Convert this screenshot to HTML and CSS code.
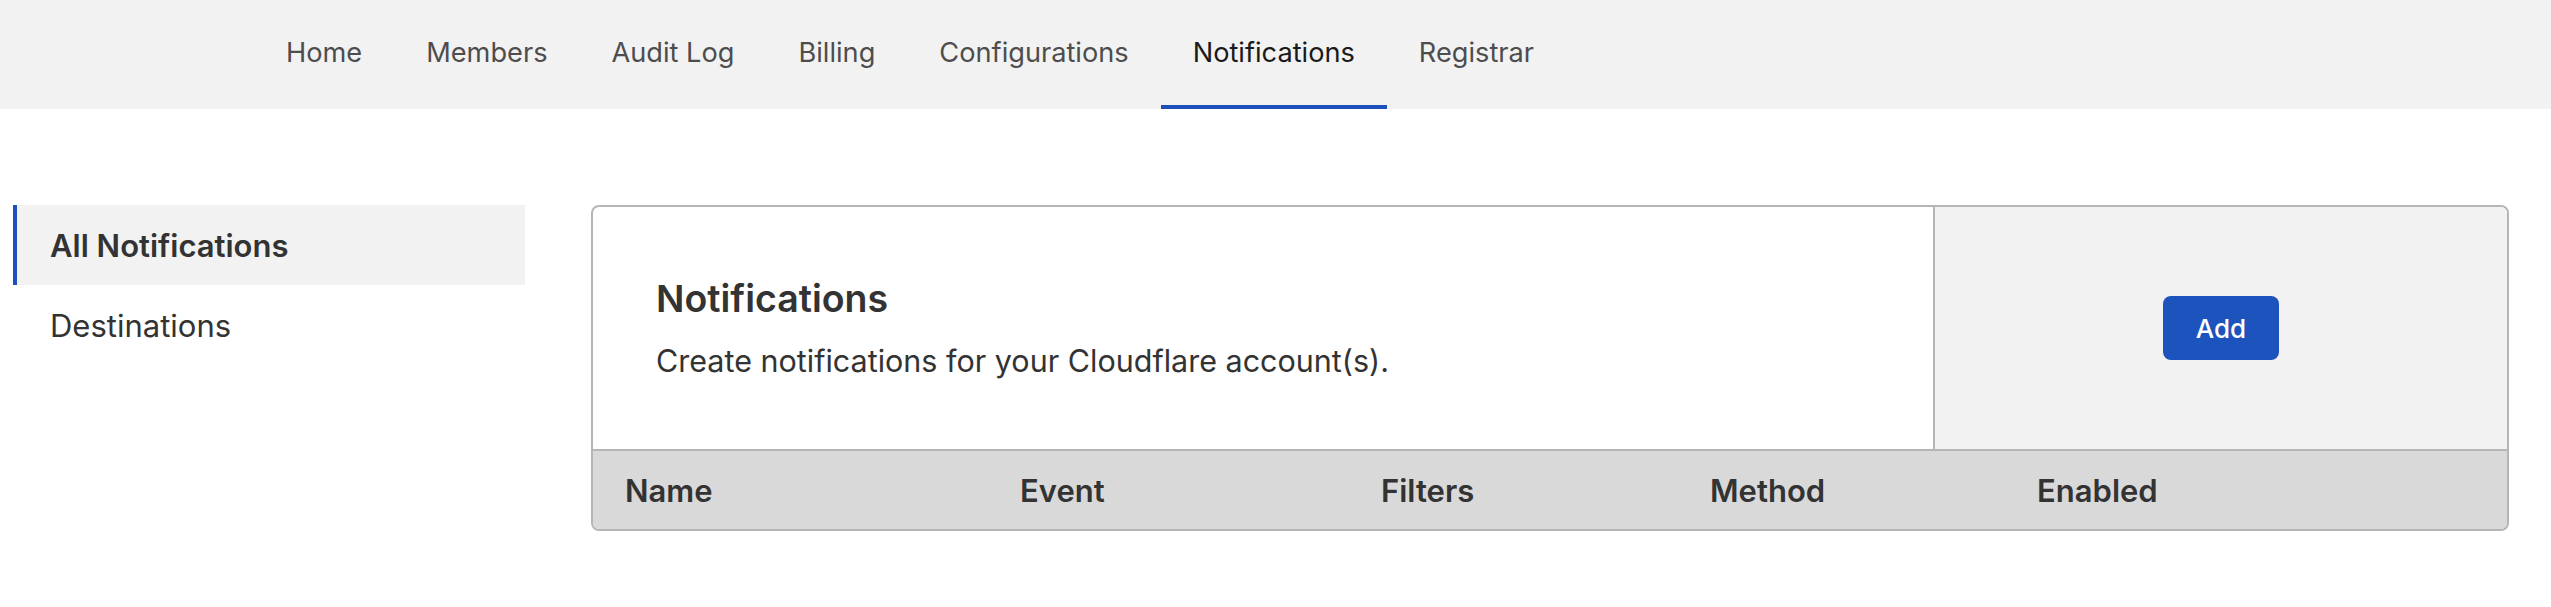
FILE: index.html
```html
<!DOCTYPE html>
<html lang="en">
<head>
<meta charset="utf-8">
<title>Notifications</title>
<link rel="stylesheet" href="styles.css">
</head>
<body>
<header class="topbar">
  <nav class="tabs">
    <a class="tab">Home</a>
    <a class="tab">Members</a>
    <a class="tab">Audit Log</a>
    <a class="tab">Billing</a>
    <a class="tab">Configurations</a>
    <a class="tab tab-active">Notifications</a>
    <a class="tab">Registrar</a>
  </nav>
</header>
<main class="main">
  <aside class="sidebar">
    <a class="side-item side-active">All Notifications</a>
    <a class="side-item">Destinations</a>
  </aside>
  <section class="card">
    <div class="card-top">
      <div class="intro">
        <h1 class="title">Notifications</h1>
        <p class="desc">Create notifications for your Cloudflare account(s).</p>
      </div>
      <div class="actions">
        <button class="btn">Add</button>
      </div>
    </div>
    <div class="thead">
      <div class="th">Name</div>
      <div class="th">Event</div>
      <div class="th">Filters</div>
      <div class="th">Method</div>
      <div class="th">Enabled</div>
    </div>
  </section>
</main>
</body>
</html>
```
FILE: styles.css
```css
* { box-sizing: border-box; }
html, body { margin: 0; padding: 0; background: #fff; }
body {
  font-family: Inter, "Noto Sans", "Liberation Sans", sans-serif;
  color: #333;
}
.topbar {
  background: #f2f2f2;
  height: 109px;
}
.tabs {
  display: flex;
  height: 109px;
  padding-left: 254px;
}
.tab {
  display: flex;
  align-items: center;
  padding: 0 32px;
  border-bottom: 4px solid transparent;
  font-size: 27.2px;
  color: #4d4d4d;
}
.tab-active {
  color: #1a1a1a;
  border-bottom-color: #1d50bb;
}
.main {
  display: flex;
  padding: 96px 42px 0 13px;
  gap: 66px;
}
.sidebar {
  width: 512px;
  flex: none;
  display: flex;
  flex-direction: column;
}
.side-item {
  height: 80px;
  display: flex;
  align-items: center;
  padding-left: 33px;
  font-size: 31px;
  color: #333;
  border-left: 4px solid transparent;
}
.side-active {
  background: #f2f2f2;
  border-left-color: #1d50bb;
  font-weight: 600;
}
.card {
  flex: 1;
  border: 2px solid #b5b5b5;
  border-radius: 8px;
  overflow: hidden;
}
.card-top {
  display: flex;
  height: 244px;
  border-bottom: 2px solid #b5b5b5;
}
.intro {
  flex: 1;
  display: flex;
  flex-direction: column;
  justify-content: center;
  padding-left: 63px;
}
.title {
  margin: 0;
  font-size: 37.5px;
  line-height: 44px;
  font-weight: 600;
  color: #333;
}
.desc {
  margin: 22px 0 0;
  font-size: 30.5px;
  line-height: 36px;
  color: #333;
}
.actions {
  width: 574px;
  flex: none;
  background: #f2f2f2;
  border-left: 2px solid #b5b5b5;
  display: flex;
  align-items: center;
  justify-content: center;
}
.btn {
  width: 116px;
  height: 64px;
  border: none;
  border-radius: 8px;
  background: #1c53bd;
  color: #fff;
  font-family: inherit;
  font-size: 26px;
  font-weight: 500;
}
.thead {
  display: grid;
  grid-template-columns: 395px 361px 329px 327px 1fr;
  height: 78px;
  align-items: center;
  padding-left: 32px;
  background: #d9d9d9;
}
.th {
  font-size: 31px;
  font-weight: 600;
  color: #333;
}
```
